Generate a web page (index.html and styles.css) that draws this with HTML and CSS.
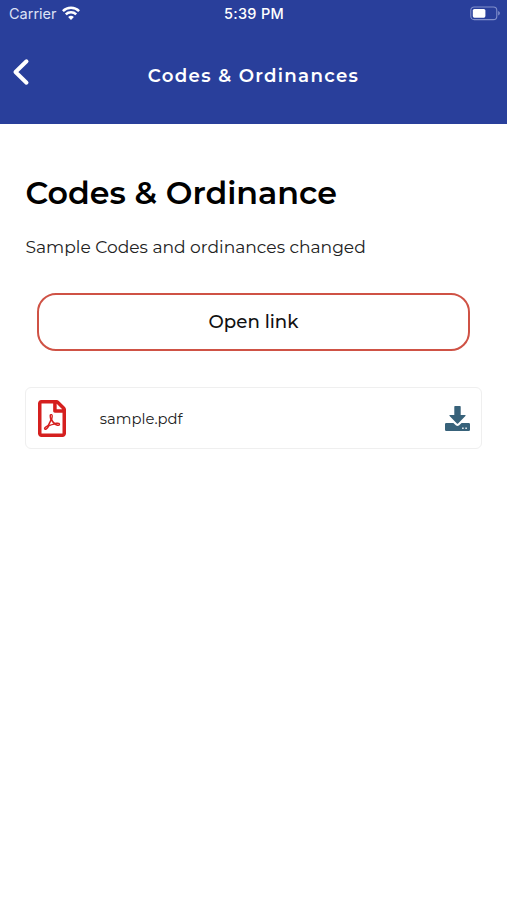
FILE: index.html
```html
<!DOCTYPE html>
<html lang="en">
<head>
  <meta charset="UTF-8">
  <meta name="viewport" content="width=device-width, initial-scale=1.0">
  <title>Codes &amp; Ordinances</title>
  <link rel="stylesheet" href="styles.css">
</head>
<body>
  <header class="header">
    <div class="status-bar">
      <div class="carrier">
        <span class="carrier-name">Carrier</span>
        <svg class="wifi" width="18" height="14" viewBox="0 0 18 14" fill="none" stroke="#fff" stroke-width="2.5">
          <path d="M0.9 5.1A11.5 11.5 0 0 1 17.1 5.1"/>
          <path d="M3.8 8.3A7.4 7.4 0 0 1 14.2 8.3"/>
          <path d="M9 14L6.1 11.1A4.1 4.1 0 0 1 11.9 11.1Z" fill="#fff" stroke="none"/>
        </svg>
      </div>
      <span class="time">5:39 PM</span>
      <svg class="battery" width="31" height="15" viewBox="0 0 31 15">
        <rect x="0.8" y="1" width="26" height="12.6" rx="3.4" fill="none" stroke="#8290cc" stroke-width="1.1"/>
        <rect x="2.8" y="2.9" width="12.6" height="8.8" rx="1.6" fill="#fff"/>
        <path d="M28.2 5.1C30.4 6 30.4 8.6 28.2 9.5Z" fill="#8290cc"/>
      </svg>
    </div>
    <div class="nav-bar">
      <a class="back" href="#" aria-label="Back">
        <svg width="18" height="28" viewBox="0 0 18 28" fill="none" stroke="#fff" stroke-width="4" stroke-linecap="round" stroke-linejoin="round">
          <path d="M14.5 3.3L3.5 14L14.5 24.7"/>
        </svg>
      </a>
      <span class="nav-title">Codes &amp; Ordinances</span>
    </div>
  </header>

  <main class="content">
    <h1 class="title">Codes &amp; Ordinance</h1>
    <p class="description">Sample Codes and ordinances changed</p>
    <button class="link-btn">Open link</button>
    <div class="file">
      <svg class="pdf-icon" width="28" height="37" viewBox="0 0 384 512" preserveAspectRatio="none" fill="#d5201f">
        <path d="M369.9 97.9L286 14C277 5 264.8-.1 252.1-.1H48C21.5 0 0 21.5 0 48v416c0 26.5 21.5 48 48 48h288c26.5 0 48-21.5 48-48V131.9c0-12.7-5.1-25-14.1-34zM332.1 128H256V51.9l76.1 76.1zM48 464V48h160v104c0 13.3 10.7 24 24 24h104v288H48zm250.2-143.7c-12.2-12-47-8.7-64.4-6.5-17.2-10.5-28.7-25-36.8-46.3 3.9-16.1 10.1-40.6 5.4-56-4.2-26.2-37.8-23.6-42.6-5.9-4.4 16.1-.4 38.5 7 67.1-10 23.9-24.9 56-35.4 74.4-20 10.3-47 26.2-51 46.2-3.3 15.8 26 55.2 76.1-31.2 22.4-7.4 46.8-16.5 68.4-20.1 18.9 10.2 41 17 55.8 17 25.5 0 28-28.2 17.5-38.7zm-198.1 77.8c5.1-13.7 24.5-29.5 30.4-35-19 30.3-30.4 35.7-30.4 35zm81.6-190.6c7.4 0 6.7 32.1 1.8 40.8-4.4-13.9-4.3-40.8-1.8-40.8zm-24.4 136.6c9.7-16.9 18-37 24.7-54.7 8.3 15.1 18.9 27.2 30.1 35.5-20.8 4.3-38.9 13.1-54.8 19.2zm131.6-5s-5 6-37.3-7.8c35.1-2.6 40.9 5.4 37.3 7.8z"/>
      </svg>
      <span class="file-name">sample.pdf</span>
      <svg class="download-icon" width="25" height="25" viewBox="0 0 25 25" fill="#38627a">
        <path d="M10 0H15Q15.7 0 15.7 .7V9H20Q21.2 9.2 20.4 10.1L13.1 17.4Q12.5 17.9 11.9 17.4L4.6 10.1Q3.8 9.2 5 9H9.3V.7Q9.3 0 10 0Z"/>
        <path fill-rule="evenodd" d="M1.2 17H8.4L10.8 19.2Q12.5 20.6 14.2 19.2L16.6 17H23.8Q25 17 25 18.2V23.8Q25 25 23.8 25H1.2Q0 25 0 23.8V18.2Q0 17 1.2 17ZM17.2 21.6V23H18.6V21.6ZM20.4 21.6V23H21.8V21.6Z"/>
      </svg>
    </div>
  </main>
</body>
</html>
```
FILE: styles.css
```css
* {
  box-sizing: border-box;
}

body {
  margin: 0;
  min-height: 100vh;
  background: #fff;
  color: #000;
  font-family: Montserrat, Inter, sans-serif;
}

.header {
  height: 124.4px;
  background: #293f9b;
  color: #fff;
}

.status-bar {
  display: grid;
  grid-template-columns: 1fr auto 1fr;
  align-items: center;
  height: 26px;
  padding: 0 6px 0 9px;
  font-family: Inter, sans-serif;
  font-size: 14.5px;
}

.carrier {
  display: flex;
  align-items: center;
  gap: 5px;
}

.carrier-name {
  color: #dde2f5;
}

.time {
  margin-right: 2px;
  font-weight: 500;
  letter-spacing: 0.3px;
}

.battery {
  justify-self: end;
}

.nav-bar {
  display: grid;
  grid-template-columns: 40px 1fr 40px;
  align-items: center;
  height: 98px;
}

.back {
  display: flex;
  padding: 0 0 6px 12px;
}

.nav-title {
  padding-top: 2px;
  text-align: center;
  font-size: 18.2px;
  line-height: 22px;
  font-weight: 600;
  letter-spacing: 1.3px;
}

.content {
  padding: 46.6px 25px 0;
}

.title {
  margin: 0 0 0 0.5px;
  font-size: 31.7px;
  line-height: 44px;
  font-weight: 600;
}

.description {
  margin: 20px 0 0 0.5px;
  font-size: 17.1px;
  line-height: 24px;
  color: #222;
}

.link-btn {
  display: block;
  width: 433px;
  height: 58px;
  margin: 34px 0 0 12px;
  border: 2px solid #cf5245;
  border-radius: 19px;
  background: #fff;
  color: #111;
  font: inherit;
  font-size: 18.2px;
  font-weight: 500;
}

.file {
  display: flex;
  align-items: center;
  height: 62px;
  margin-top: 36px;
  padding: 1px 11.5px 0 12px;
  border: 1px solid #efefef;
  border-radius: 6px;
}

.file-name {
  flex: 1;
  margin-left: 33.8px;
  padding-top: 1px;
  font-size: 14.8px;
  color: #222;
}
```
